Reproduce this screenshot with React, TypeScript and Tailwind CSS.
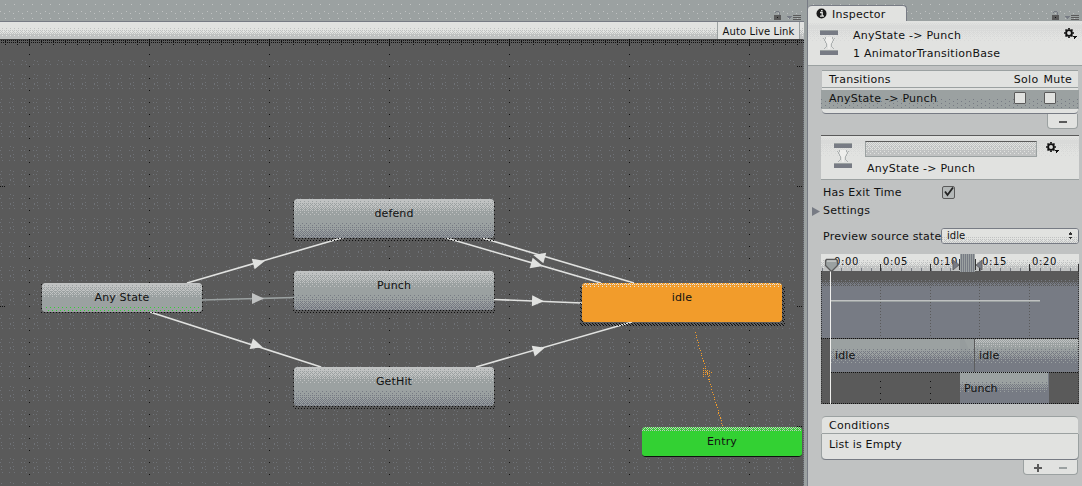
import { useId, type ReactNode } from "react";

const BAYER = [
  [0, 8, 2, 10],
  [12, 4, 14, 6],
  [3, 11, 1, 9],
  [15, 7, 13, 5],
];

type Stop = [number, string];

/** Vertical ordered-dither gradient between palette colours. */
function Dither({ h, stops, className = "" }: { h: number; stops: Stop[]; className?: string }) {
  const id = useId().replace(/[^a-zA-Z0-9]/g, "");
  const paths: Record<string, string> = {};
  for (let y = 0; y < h; y++) {
    let i = 0;
    while (i < stops.length - 2 && y >= stops[i + 1][0]) i++;
    const [y0, c0] = stops[i];
    const [y1, c1] = stops[i + 1];
    const t = Math.min(1, Math.max(0, (y - y0) / (y1 - y0)));
    for (let x = 0; x < 4; x++) {
      const c = t * 16 > BAYER[y % 4][x] + 0.5 ? c1 : c0;
      paths[c] = (paths[c] ?? "") + `M${x} ${y}h1v1h-1z`;
    }
  }
  return (
    <svg className={`pointer-events-none absolute inset-0 h-full w-full ${className}`} shapeRendering="crispEdges">
      <pattern id={id} width="4" height={h} patternUnits="userSpaceOnUse">
        {Object.entries(paths).map(([c, d]) => (
          <path key={c} d={d} fill={c} />
        ))}
      </pattern>
      <rect width="100%" height={h} fill={`url(#${id})`} />
    </svg>
  );
}

/** Sparse speckle built from a list of points in a repeating tile. */
function Speckle({ w, h, points, color, className = "" }: { w: number; h: number; points: number[][]; color: string; className?: string }) {
  const id = useId().replace(/[^a-zA-Z0-9]/g, "");
  return (
    <svg className={`pointer-events-none absolute ${className}`} shapeRendering="crispEdges">
      <pattern id={id} width={w} height={h} patternUnits="userSpaceOnUse">
        <path d={points.map(([x, y]) => `M${x} ${y}h1v1h-1z`).join("")} fill={color} />
      </pattern>
      <rect width="100%" height="100%" fill={`url(#${id})`} />
    </svg>
  );
}

function WindowControls() {
  return (
    <svg width="28" height="11" viewBox="0 0 28 11" shapeRendering="crispEdges">
      <path d="M0 5h7v5H0z" fill="#5a5a5a" />
      <path d="M2 1h3v1H2zM1 2h1v1H1zM5 2h1v3H5z" fill="#777b84" />
      <path d="M3 7h1v1H3z" fill="#111" />
      <path d="M13 6h5v1h-1v1h-1v1h-1V8h-1V7h-1z" fill="#777b84" />
      <path d="M19 5h8v1h-8zM19 7h8v1h-8zM19 9h8v1h-8z" fill="#5a5a5a" />
    </svg>
  );
}

function Gear() {
  return (
    <svg width="14" height="12" viewBox="0 0 14 12">
      <circle cx="5" cy="5" r="2.9" fill="none" stroke="#111" strokeWidth="1.9" />
      <path
        d="M5 0v1.6M5 8.4V10M0 5h1.6M8.4 5H10M1.5 1.5l1.2 1.2M7.3 7.3l1.2 1.2M1.5 8.5l1.2-1.2M7.3 2.7l1.2-1.2"
        stroke="#111"
        strokeWidth="1.7"
      />
      <path d="M9 8h4v1h-1v1h-1v1h-1V9H9z" fill="#111" shapeRendering="crispEdges" />
    </svg>
  );
}

function TransitionIcon() {
  return (
    <svg width="18" height="26" viewBox="0 0 18 26" shapeRendering="crispEdges">
      <path d="M0 0h18v5H0zM0 20h18v5H0z" fill="#777b84" />
      <path d="M0 0h18v1H0zM0 20h18v1H0z" fill="#9ba1a1" />
      <path d="M6 7h6v4l-2 4v4H8v-4l-2-4z" fill="#eeeeec" />
      <path
        d="M3 8h1v1H3zM4 9h1v2H4zM5 7h1v2H5zM5 11h1v2H5zM6 13h1v4H6zM5 17h1v1H5zM4 18h1v1H4zM14 8h1v1h-1zM13 9h1v2h-1zM12 7h1v2h-1zM12 11h1v2h-1zM11 13h1v4h-1zM12 17h1v1h-1zM13 18h1v1h-1z"
        fill="#aeb2b2"
      />
    </svg>
  );
}

function Checkbox({ checked = false }: { checked?: boolean }) {
  return (
    <span
      className={`relative block shrink-0 border border-[#5a5a5a] ${
        checked ? "size-[13px] rounded-[2px] bg-[#b4b8b8]" : "size-3 rounded-[1px] bg-[#e1e2e0]"
      }`}
    >
      {checked && (
        <svg className="absolute -left-px -top-px" width="13" height="13" viewBox="0 0 13 13">
          <path d="M3 5.5L5.5 9L11 1.5" fill="none" stroke="#222" strokeWidth="1.8" />
        </svg>
      )}
    </span>
  );
}

function PaneHeader({ children }: { children?: ReactNode }) {
  return (
    <div className="relative flex h-[21px] shrink-0 items-end justify-between bg-[#9ba1a1]">
      <Speckle w={9} h={14} points={[[5, 4], [0, 11], [4, 13]]} color="#c0c2c2" className="left-0 top-0 h-full w-full" />
      <div className="relative">{children}</div>
      <div className="relative mr-[2px] h-[11px]">
        <WindowControls />
      </div>
    </div>
  );
}

const GREY: Stop[] = [[0, "#c0c2c2"], [16, "#9ba1a1"], [22, "#9ba1a1"], [48, "#777b84"]];

function StateNode({ label, box, stops, base, progress = false, tone = "grey" }: { label: string; box: string; stops: Stop[]; base: string; progress?: boolean; tone?: string }) {
  return (
    <div className={`absolute ${box}`}>
      {tone === "grey" && (
        <Speckle w={3} h={4} points={[[0, 0], [2, 2]]} color="#111" className={`-left-px h-full w-[calc(100%+2px)] ${progress ? "top-px" : "top-[3px]"}`} />
      )}
      {tone === "idle" && (
        <Speckle w={3} h={4} points={[[0, 0], [2, 2], [1, 1]]} color="#111" className="-left-[2px] top-1 h-full w-[calc(100%+5px)]" />
      )}
      <div className={`relative h-full overflow-hidden rounded ${base}`}>
        <Dither h={40} stops={stops} />
        {progress && (
          <Speckle w={4} h={6} points={[[0, 2], [2, 5]]} color="#33d133" className="bottom-[1px] left-1 h-[6px] w-[154px]" />
        )}
        <div className="relative flex justify-center pt-2 leading-[14px] tracking-[0.15px]">{label}</div>
      </div>
    </div>
  );
}

function Arrow({ x, y, angle, color = "#e1e2e0" }: { x: number; y: number; angle: number; color?: string }) {
  return <path d="M-6 -5.5L6 0L-6 5.5z" fill={color} transform={`translate(${x} ${y}) rotate(${angle})`} />;
}

function Graph() {
  const grid = [29, 149, 269, 389, 509, 629, 749];
  return (
    <div className="relative flex-1 overflow-hidden bg-[#5a5a5a]">
      <Speckle
        w={12}
        h={24}
        points={[[10, 0], [1, 1], [2, 4], [9, 4], [10, 14], [1, 15], [0, 18], [9, 18], [1, 22], [10, 23]]}
        color="#6f7277"
        className="left-0 top-[21px] h-full w-[799px]"
      />
      <svg className="absolute left-0 top-0" width="804" height="447" shapeRendering="crispEdges">
        <path d="M0 .5H804" stroke="#444" />
        <path d="M1 1.5H804M1 3.5H804" stroke="#111" strokeDasharray="1 1" />
        <path d="M5 2.5H804M5 5.5H804" stroke="#111" strokeDasharray="1 11" />
        {grid.map((x) => (
          <g key={x} stroke="#111">
            <path d={`M${x}.5 0v7`} />
            <path d={`M${x}.5 15V447`} strokeDasharray="1 11" />
          </g>
        ))}
        <path d="M797 27.5h6M797 147.5h6M797 267.5h6M0 147.5h6M0 267.5h6M797 387.5h6" stroke="#111" strokeDasharray="1 1" />
        <path d="M803.5 0V447" stroke="#777b84" strokeDasharray="1 1" />
      </svg>
      <svg className="absolute left-0 top-0" width="804" height="447">
        <g fill="none" stroke="#e1e2e0" strokeWidth="1.6">
          <path d="M187 244L345 198M150 273L321 328M443 198L601 244M479 198L634 244M494 260.5L582 264M476 328L632 283" />
          <path d="M202 261L294 258.5" stroke="#9ba1a1" />
        </g>
        <Arrow x={259} y={223.5} angle={-15} />
        <Arrow x={258} y={259.5} angle={0} color="#c0c2c2" />
        <Arrow x={257} y={306.5} angle={18} />
        <Arrow x={537} y={225.5} angle={15} />
        <Arrow x={539} y={217.5} angle={195} />
        <Arrow x={538} y={262} angle={2} />
        <Arrow x={539} y={310.5} angle={-16} />
        <g shapeRendering="crispEdges">
          <path d="M695 293L723 388" stroke="#f29c2b" strokeWidth="1" strokeDasharray="1.2 1.5" />
          <path d="M703.5 329v9M705.5 329v7M707.5 331v5M709.5 332v6M711.5 333v2" stroke="#f29c2b" strokeDasharray="1 1" />
        </g>
      </svg>
      <StateNode label="defend" box="left-[294px] top-[160px] h-[39px] w-[200px]" base="bg-[#9ba1a1]" stops={GREY} />
      <StateNode label="Punch" box="left-[294px] top-[232px] h-[39px] w-[200px]" base="bg-[#9ba1a1]" stops={GREY} />
      <StateNode label="GetHit" box="left-[294px] top-[328px] h-[39px] w-[200px]" base="bg-[#9ba1a1]" stops={GREY} />
      <StateNode label="Any State" box="left-[42px] top-[244px] h-[29px] w-[160px]" base="bg-[#9ba1a1]" stops={[[0, "#c0c2c2"], [15, "#9ba1a1"], [40, "#9ba1a1"]]} progress />
      <StateNode label="idle" tone="idle" box="left-[582px] top-[244px] h-[39px] w-[200px]" base="bg-[#f29c2b]" stops={[[-5, "#e1e2e0"], [4, "#f29c2b"], [40, "#f29c2b"]]} />
      <StateNode label="Entry" tone="entry" box="left-[642px] top-[388px] h-[30px] w-[160px]" base="border-b border-[#111] bg-[#33d133]" stops={[[-4, "#c0c2c2"], [5, "#33d133"], [40, "#33d133"]]} />
    </div>
  );
}

const TIMES = [
  { label: "0:00", pos: "left-[13px]" },
  { label: "0:05", pos: "left-[62px]" },
  { label: "0:10", pos: "left-[112px]" },
  { label: "0:15", pos: "left-[161px]" },
  { label: "0:20", pos: "left-[211px]" },
];

function Timeline() {
  const minor = Array.from({ length: 27 }, (_, i) => Math.round(0.5 + i * 9.92));
  return (
    <div className="relative ml-[13px] mt-[10px] h-[151px] w-[258px] overflow-hidden bg-[#5a5a5a]">
      <div className="relative h-[17px] bg-[#e1e2e0]">
        <Dither h={17} stops={[[0, "#e1e2e0"], [5, "#e1e2e0"], [15, "#c0c2c2"]]} />
        {TIMES.map((t) => (
          <span key={t.label} className={`absolute top-[1px] leading-[14px] text-[10px] tracking-[0.65px] ${t.pos}`}>
            {t.label}
          </span>
        ))}
      </div>
      <div className="relative h-[67px] border-t border-[#5a5a5a]">
        <Dither h={66} stops={[[0, "#5a5a5a"], [7, "#5a5a5a"], [15, "#777b84"], [66, "#777b84"]]} />
      </div>
      <div className="relative ml-[10px] flex h-[34px] border-t border-[#5a5a5a]">
        <div className="relative w-[144px] border-r border-[#5a5a5a]">
          <Dither h={33} stops={[[0, "#9ba1a1"], [8, "#9ba1a1"], [24, "#777b84"]]} />
          <span className="relative block pl-1 pt-[10px] leading-[14px] tracking-[0.15px]">idle</span>
        </div>
        <div className="relative w-[104px]">
          <Dither h={33} stops={[[-4, "#c0c2c2"], [8, "#9ba1a1"], [24, "#777b84"]]} />
          <span className="relative block pl-1 pt-[10px] leading-[14px] tracking-[0.15px]">idle</span>
        </div>
      </div>
      <div className="relative ml-[139px] h-[32px] w-[89px] border-r border-[#777b84]">
        <Dither h={32} stops={[[0, "#9ba1a1"], [8, "#9ba1a1"], [20, "#777b84"]]} />
        <span className="relative block pl-1 pt-[10px] leading-[14px]">Punch</span>
      </div>
      <svg className="absolute left-0 top-0" width="258" height="151">
        <g shapeRendering="crispEdges">
          <path d={minor.map((x) => `M${x}.5 14v3`).join("")} stroke="#777b84" />
          <path d="M59.5 10v7M109.5 10v7M158.5 10v7M208.5 10v7M257.5 10v7" stroke="#333" />
          <path d="M59.5 27v56M109.5 27v56M158.5 27v56M208.5 27v56" stroke="#5a5a5a" strokeDasharray="1 2" />
          <path d="M59.5 127v22M109.5 127v22" stroke="#111" strokeDasharray="1 5" />
          <path d="M0 84.5H258M10 118.5H258M0 149.5H258" stroke="#111" strokeDasharray="1 1" />
          <path d="M.5 17V151M257.5 17V151" stroke="#333" strokeDasharray="1 1" />
          <path d="M0 150.5H258" stroke="#c0c2c2" />
          <path d="M10 46.5H219" stroke="#c0c2c2" />
          <path d="M10 47.5H219" stroke="#9ba1a1" />
          <path d="M139 0h15v18h-15z" fill="#9ba1a1" />
          <path d="M140.5 0v18M142.5 0v18M144.5 0v18M146.5 0v18M148.5 0v18M150.5 0v18M152.5 0v18" stroke="#777b84" />
          <path d="M138.5 5v11M154.5 5v11" stroke="#333" />
          <path d="M9.5 16V150" stroke="#f0f0ee" />
        </g>
        <path d="M132 6l6 5-6 5zM161 6l-6 5 6 5z" fill="#777b84" stroke="#5a5a5a" strokeWidth=".8" />
        <path d="M5.5 5.5h10l1 1v5l-6 6-6-6v-5z" fill="#9ba1a1" stroke="#5a5a5a" strokeWidth="1.3" />
        <path d="M6 7h9" stroke="#e1e2e0" />
        <path d="M139 85h4l11 24v9h-15z" fill="#777b84" fillOpacity=".12" />
      </svg>
    </div>
  );
}

function Inspector() {
  return (
    <div className="flex w-[275px] shrink-0 flex-col border-l border-[#777b84] bg-[#c0c2c2]">
      <PaneHeader>
        <div className="flex h-4 w-[99px] items-center rounded-t border-r border-t border-[#777b84] bg-[#e1e2e0] pl-2">
          <svg width="11" height="11" viewBox="0 0 11 11">
            <circle cx="5.5" cy="5.5" r="5" fill="#1a1a1a" />
            <path d="M4 4.5h2.2v3.5H7.5M4 8.2h4M5 2.6h1.6" stroke="#e1e2e0" strokeWidth="1.3" fill="none" />
          </svg>
          <span className="ml-[5px] mt-[3px] leading-[14px] tracking-[0.25px]">Inspector</span>
        </div>
      </PaneHeader>
      <div className="relative flex h-[45px] shrink-0 border-b border-[#9ba1a1] bg-[#e1e2e0] pl-3">
        <Dither h={44} stops={[[0, "#e1e2e0"], [5, "#d9dad9"], [20, "#e1e2e0"], [44, "#e1e2e0"]]} />
        <div className="relative mt-[9px]">
          <TransitionIcon />
        </div>
        <div className="relative ml-[15px] mt-[6px] flex-1 leading-[18px] tracking-[0.26px]">
          <div>AnyState -&gt; Punch</div>
          <div>1 AnimatorTransitionBase</div>
        </div>
        <div className="relative mr-[4px] mt-[7px]">
          <Gear />
        </div>
      </div>

      <div className="ml-[14px] mt-[4px] w-[256px] shrink-0">
        <div className="flex h-[18px] items-center border-b border-t border-[#9ba1a1] bg-[#e1e2e0] pl-[7px] pt-[2px] tracking-[0.26px]">
          <span className="flex-1">Transitions</span>
          <span className="mr-[5px]">Solo</span>
          <span className="mr-[6px]">Mute</span>
        </div>
        <div className="h-[2px] bg-[#e1e2e0]" />
        <div className="relative -ml-px -mr-px flex h-[19px] items-start bg-[#9ba1a1] pl-2 pt-[2px]">
          <Speckle w={8} h={4} points={[[0, 0], [4, 2]]} color="#777b84" className="left-0 top-[9px] h-[10px] w-full" />
          <span className="relative flex-1 leading-[14px] tracking-[0.26px]">AnyState -&gt; Punch</span>
          <span className="relative mr-[18px]"><Checkbox /></span>
          <span className="relative mr-[23px]"><Checkbox /></span>
        </div>
        <div className="h-[5px] rounded-b border-b border-[#777b84] bg-[#e1e2e0]" />
        <div className="ml-auto flex h-[15px] w-[31px] items-center justify-center rounded-b border border-t-0 border-[#9ba1a1] bg-[#e1e2e0]">
          <span className="mt-[2px] h-[2px] w-2 bg-[#5a5a5a]" />
        </div>
      </div>

      <div className="relative ml-[13px] mt-[6px] flex h-[45px] w-[258px] shrink-0 border-b border-t border-b-[#9ba1a1] border-t-[#5a5a5a] bg-[#e1e2e0] pl-[13px]">
        <Dither h={43} stops={[[0, "#e1e2e0"], [5, "#d9dad9"], [20, "#e1e2e0"], [44, "#e1e2e0"]]} />
        <div className="relative mt-[7px]">
          <TransitionIcon />
        </div>
        <div className="relative ml-[13px] mt-[5px]">
          <div className="relative h-4 w-[172px] overflow-hidden border border-[#9ba1a1] border-t-[#5a5a5a] bg-[#d2d3d2]">
            <Dither h={14} stops={[[-14, "#e1e2e0"], [14, "#c0c2c2"]]} />
          </div>
          <div className="ml-[2px] mt-[5px] leading-[14px] tracking-[0.26px]">AnyState -&gt; Punch</div>
        </div>
        <div className="relative ml-[9px] mt-[6px]">
          <Gear />
        </div>
      </div>

      <div className="ml-[15px] mt-[4px] flex h-4 shrink-0 items-center">
        <span className="mt-px w-[119px] leading-[14px] tracking-[0.26px]">Has Exit Time</span>
        <Checkbox checked />
      </div>
      <div className="ml-[4px] mt-[3px] flex h-4 shrink-0 items-center">
        <svg width="8" height="9" viewBox="0 0 8 9">
          <path d="M0 0L8 4.5L0 9z" fill="#777b84" />
        </svg>
        <span className="ml-[3px] leading-[14px] tracking-[0.26px]">Settings</span>
      </div>
      <div className="ml-[15px] mt-[9px] flex h-4 shrink-0 items-center">
        <span className="mt-[2px] w-[118px] overflow-hidden whitespace-nowrap leading-[14px] tracking-[0.22px]">Preview source state</span>
        <div className="relative flex h-4 w-[138px] items-center justify-between overflow-hidden rounded-[3px] border border-[#777b84] bg-[#e1e2e0] pl-[5px] pr-[5px] text-[10px]">
          <Dither h={14} stops={[[0, "#e1e2e0"], [6, "#e1e2e0"], [18, "#c0c2c2"]]} />
          <span className="relative leading-[14px]">idle</span>
          <svg className="relative" width="5" height="8" viewBox="0 0 5 8" shapeRendering="crispEdges">
            <path d="M2 0h1v1h1v2H1V1h1zM1 5h3v1H3v1H2V6H1z" fill="#333" />
          </svg>
        </div>
      </div>

      <Timeline />

      <div className="ml-[14px] mt-[11px] w-[256px] shrink-0">
        <div className="flex h-[18px] items-center rounded-t border-b border-t border-[#9ba1a1] bg-[#e1e2e0] pl-[7px] pt-[2px] tracking-[0.26px]">Conditions</div>
        <div className="h-[26px] rounded-b border-b border-[#777b84] bg-[#e1e2e0] pl-[7px] pt-[4px] leading-[14px] tracking-[0.2px] shadow-[1px_0_0_#9ba1a1,-1px_0_0_#9ba1a1]">List is Empty</div>
        <div className="ml-auto flex h-[15px] w-[55px] items-center justify-between rounded-b border border-t-0 border-[#9ba1a1] bg-[#e1e2e0] pl-[10px] pr-[10px]">
          <svg className="mt-[2px]" width="9" height="8" viewBox="0 0 9 8" shapeRendering="crispEdges">
            <path d="M0 3h8v2H0zM3 0h2v8H3z" fill="#5a5a5a" />
          </svg>
          <span className="mt-[2px] h-[2px] w-2 bg-[#9ba1a1]" />
        </div>
      </div>
    </div>
  );
}

export default function App() {
  return (
    <div className="flex h-[486px] w-[1082px] overflow-hidden bg-[#9ba1a1] font-['DejaVu_Sans',sans-serif] text-[11px] leading-[14px] text-[#111]">
      <div className="flex w-[804px] shrink-0 flex-col">
        <PaneHeader />
        <div className="relative flex h-[18px] shrink-0 justify-end border-t border-[#777b84]">
          <Dither h={17} stops={[[0, "#e1e2e0"], [5, "#e1e2e0"], [15, "#c0c2c2"], [17, "#c0c2c2"]]} />
          <div className="relative mr-[4px] flex w-[83px] items-center justify-center border-x border-[#9ba1a1] bg-[#e1e2e0] pt-[2px] text-[10px] tracking-[0.1px]">
            Auto Live Link
          </div>
        </div>
        <Graph />
      </div>
      <div className="w-[3px] shrink-0 bg-[#9ba1a1]" />
      <Inspector />
    </div>
  );
}
